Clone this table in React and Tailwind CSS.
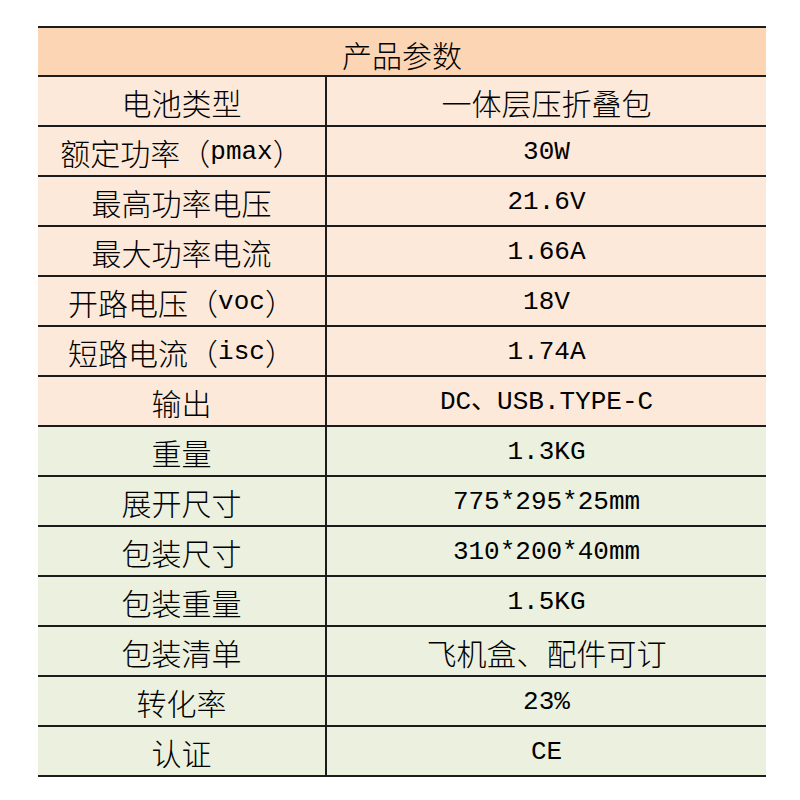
const rows = [
  { k: "电池类型", v: "一体层压折叠包", cjk: true, tone: "peach" },
  { k: "额定功率", kx: "pmax", v: "30W", tone: "peach" },
  { k: "最高功率电压", v: "21.6V", tone: "peach" },
  { k: "最大功率电流", v: "1.66A", tone: "peach" },
  { k: "开路电压", kx: "voc", v: "18V", tone: "peach" },
  { k: "短路电流", kx: "isc", v: "1.74A", tone: "peach" },
  { k: "输出", v: "DC、USB.TYPE-C", tone: "peach" },
  { k: "重量", v: "1.3KG", tone: "green" },
  { k: "展开尺寸", v: "775*295*25mm", tone: "green" },
  { k: "包装尺寸", v: "310*200*40mm", tone: "green" },
  { k: "包装重量", v: "1.5KG", tone: "green" },
  { k: "包装清单", v: "飞机盒、配件可订", cjk: true, tone: "green" },
  { k: "转化率", v: "23%", tone: "green" },
  { k: "认证", v: "CE", tone: "green" },
];

const cjkFont = "font-['Noto_Sans_CJK_SC',sans-serif] font-light";
const monoFont = "font-['Liberation_Mono','Noto_Sans_CJK_SC',monospace]";

const Row = ({ row }) => (
  <div
    className={`flex h-[50px] border-b-2 border-[#1c1c1c] ${
      row.tone === "peach" ? "bg-[#fde9d9]" : "bg-[#ebf1de]"
    }`}
  >
    <div
      className={`w-[289px] flex items-center justify-center pt-0.5 border-r-2 border-[#1c1c1c] text-[30px] leading-none ${cjkFont}`}
    >
      {row.k}
      {row.kx && (
        <>
          <span>（</span>
          <span className={`text-[26px] font-normal ${monoFont}`}>{row.kx}</span>
          <span>）</span>
        </>
      )}
    </div>
    <div
      className={`flex-1 flex items-center justify-center pt-0.5 leading-none ${
        row.cjk ? `text-[30px] ${cjkFont}` : `text-[26px] ${monoFont}`
      }`}
    >
      {row.v}
    </div>
  </div>
);

export default function App() {
  return (
    <div className="w-[800px] h-[800px] bg-white pt-[26px] pl-[38px] text-black">
      <div className="w-[728px] border-t-2 border-[#1c1c1c]">
        <div
          className={`h-[49px] flex items-center justify-center bg-[#fcd5b4] border-b-2 border-[#1c1c1c] text-[30px] leading-none pt-1 ${cjkFont}`}
        >
          产品参数
        </div>
        {rows.map((r) => (
          <Row key={r.k} row={r} />
        ))}
      </div>
    </div>
  );
}
